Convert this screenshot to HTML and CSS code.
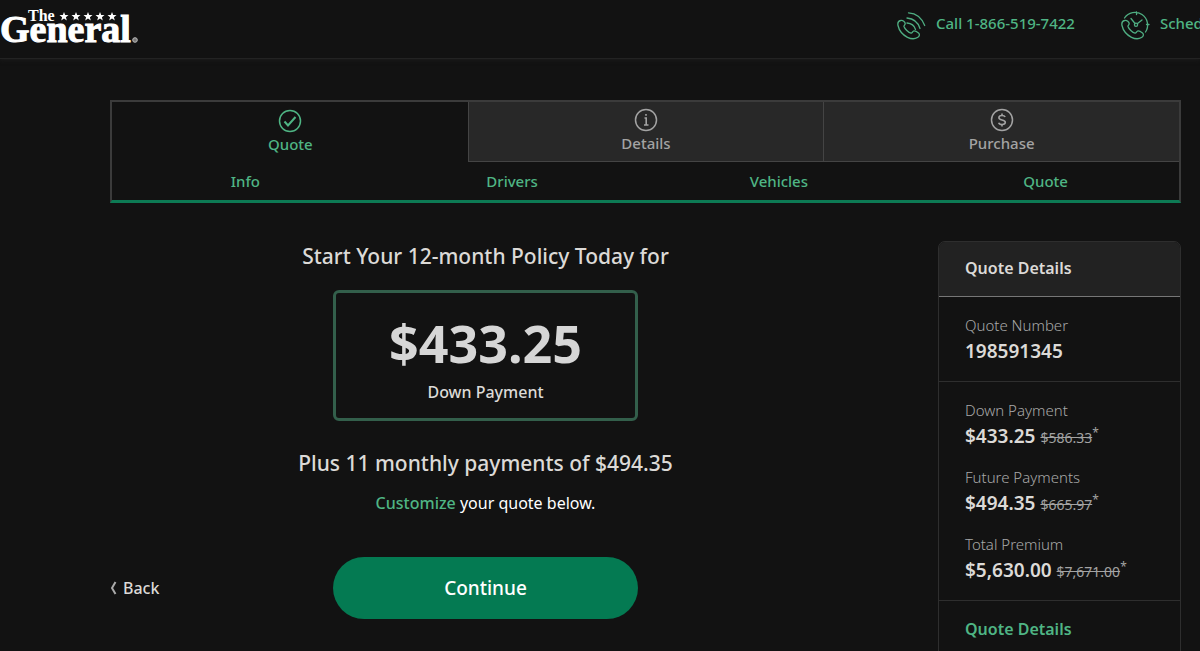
FILE: index.html
```html
<!DOCTYPE html>
<html lang="en">
<head>
	<meta charset="utf-8">
	<title>The General - Your Quote</title>
	<link rel="stylesheet" href="styles.css">
</head>
<body>
	<header class="header">
		<a class="logo" href="#" aria-label="The General">
			<svg width="140" height="40" viewBox="0 0 140 40" fill="#fff">
				<text class="logo-main" x="0" y="36">General</text>
				<text class="logo-the" x="28" y="15">The</text>
				<defs>
					<path id="star" d="M0-4.6 1.2-1.5 4.5-1.4 1.9.7 2.8 3.9 0 2.1-2.8 3.9-1.9.7-4.5-1.4-1.2-1.5z"/>
				</defs>
				<use href="#star" x="64" y="10.500"/>
				<use href="#star" x="76" y="10.500"/>
				<use href="#star" x="88" y="10.500"/>
				<use href="#star" x="100" y="10.500"/>
				<use href="#star" x="112" y="10.500"/>
				<circle cx="135" cy="34" r="2.300" fill="#777" stroke="#bbb"/>
			</svg>
		</a>
		<nav class="contact">
			<a class="contact-link" href="#">
				<svg width="30" height="30" viewBox="0 0 30 30" class="line-icon">
					<path d="M4.500 10.500C2.500 11 1.500 13 2 15.500 3 20 7 25 11.500 27.300 15 29 19 29 21.500 27.500 23.500 26.300 24 24.300 22.500 23 21 21.800 18.800 20.700 17.700 21 16.300 21.500 16.500 23.300 15 23.200 12.500 22.700 8.700 18.800 8 16.500 7.700 15.200 9.300 15 9.200 13.500 9.100 12 7 9.800 4.500 10.500z"/>
					<path d="M11 13c4 .3 7.500 3 8.500 6.500M11 8c6 .5 11 4 13 10.500M12.500 2.800c7.500.5 13.500 5.500 16.200 12.700"/>
				</svg>
				<span>Call 1-866-519-7422</span>
			</a>
			<a class="contact-link" href="#">
				<svg width="30" height="30" viewBox="0 0 30 30" class="line-icon">
					<path d="M4.500 10.500C2.500 11 1.500 13 2 15.500 3 20 7 25 11.500 27.300 15 29 19 29 21.500 27.500 23.500 26.300 24 24.300 22.500 23 21 21.800 18.800 20.700 17.700 21 16.300 21.500 16.500 23.300 15 23.200 12.500 22.700 8.700 18.800 8 16.500 7.700 15.200 9.300 15 9.200 13.500 9.100 12 7 9.800 4.500 10.500z"/>
					<path d="M4.500 8A12.500 12.500 0 1 1 25.500 22M16.500 2v2.500M29 14.500h-2.500M11 8.500l4 5M17.500 13.500l4.500-3.500"/>
					<circle cx="16" cy="14.800" r="1.600"/>
				</svg>
				<span>Schedule a Call</span>
			</a>
		</nav>
	</header>

	<main class="page">
		<nav class="progress">
			<div class="tabs">
				<a class="tab active" href="#">
					<svg width="24" height="24" viewBox="0 0 24 24" class="tab-icon">
						<circle cx="12" cy="12" r="10.500"/>
						<path d="M6.500 12.500 10 16.500 17.500 8" stroke-width="2"/>
					</svg>
					<span>Quote</span>
				</a>
				<a class="tab" href="#">
					<svg width="24" height="24" viewBox="0 0 24 24" class="tab-icon">
						<circle cx="12" cy="12" r="10.500"/>
						<path d="M10.500 10H12.200V17M10 17H14.500M12 6V7.800" stroke-width="1.600"/>
					</svg>
					<span>Details</span>
				</a>
				<a class="tab" href="#">
					<svg width="24" height="24" viewBox="0 0 24 24" class="tab-icon">
						<circle cx="12" cy="12" r="10.500"/>
						<path d="M15.200 9C14.600 7.800 13.500 7.500 12 7.500 10.200 7.500 8.900 8.300 8.900 9.700 8.900 12.800 15.300 11 15.300 14.300 15.300 15.700 14 16.500 12.100 16.500 10.300 16.500 9.100 16 8.700 14.700M12 5.500v2M12 16.500v2" stroke-width="1.600"/>
					</svg>
					<span>Purchase</span>
				</a>
			</div>
			<div class="steps">
				<a href="#">Info</a>
				<a href="#">Drivers</a>
				<a href="#">Vehicles</a>
				<a href="#">Quote</a>
			</div>
		</nav>

		<div class="content">
			<section class="quote">
				<h1 class="quote-title">Start Your 12-month Policy Today for</h1>
				<div class="price-box">
					<strong class="price">$433.25</strong>
					<span class="price-label">Down Payment</span>
				</div>
				<h2 class="quote-title">Plus 11 monthly payments of $494.35</h2>
				<p class="customize"><a href="#">Customize</a> your quote below.</p>
				<div class="actions">
					<a class="back" href="#">
						<svg width="7" height="14" viewBox="0 0 7 14"><path d="M5.500 1 2 7 5.500 13"/></svg>
						<span>Back</span>
					</a>
					<button class="continue" type="button">Continue</button>
				</div>
			</section>

			<aside class="details">
				<h3 class="details-head">Quote Details</h3>
				<dl class="details-group">
					<dt>Quote Number</dt>
					<dd>198591345</dd>
				</dl>
				<dl class="details-group">
					<dt>Down Payment</dt>
					<dd>$433.25 <small><s>$586.33</s><sup>*</sup></small></dd>
					<dt>Future Payments</dt>
					<dd>$494.35 <small><s>$665.97</s><sup>*</sup></small></dd>
					<dt>Total Premium</dt>
					<dd>$5,630.00 <small><s>$7,671.00</s><sup>*</sup></small></dd>
				</dl>
				<div class="details-group">
					<a class="details-link" href="#">Quote Details</a>
				</div>
			</aside>
		</div>
	</main>
</body>
</html>
```
FILE: styles.css
```css
* {
	box-sizing: border-box;
}
body {
	height: 100vh;
	margin: 0;
	overflow: hidden;
	background: #121212;
	color: #dcdad7;
	font-family: "Noto Sans", "Open Sans", sans-serif;
	font-size: 16px;
	line-height: 24px;
}
a {
	color: #4fb584;
	text-decoration: none;
}
h1, h2, h3, p, dl, dd {
	margin: 0;
}

/* header */
.header {
	display: flex;
	justify-content: space-between;
	height: 58px;
	overflow: hidden;
	box-shadow: 0 1px 0 #232323, 0 2px 4px #1d1d1d;
}
.logo {
	padding-top: 6px;
}
.logo-main {
	font: bold 38px "Liberation Serif", serif;
	stroke: #fff;
}
.logo-the {
	font: bold 16px "Liberation Serif", serif;
}
.contact {
	display: flex;
	gap: 45px;
	width: 304px;
	padding-top: 10px;
	font-size: 15px;
	font-weight: 500;
	white-space: nowrap;
}
.contact-link {
	display: flex;
	gap: 10px;
	line-height: 26px;
}
.line-icon {
	flex: none;
	fill: none;
	stroke: #4fae82;
	stroke-width: 1.3;
	stroke-linecap: round;
}

/* progress tabs */
.page {
	padding: 42px 19px 0 110px;
}
.progress {
	border: 2px solid #3b3b3b;
	border-bottom: 3px solid #0d7a54;
	font-size: 15px;
	font-weight: 500;
}
.tabs {
	display: grid;
	grid-template-columns: repeat(3, 1fr);
}
.tab {
	display: flex;
	flex-direction: column;
	align-items: center;
	padding-top: 6px;
	height: 60px;
	line-height: 22px;
	color: #a3a3a3;
	background: #282828;
	border-bottom: 1px solid #444;
	border-left: 1px solid #444;
}
.tab.active {
	padding-top: 7px;
	color: #4fb584;
	background: none;
	border-color: transparent;
}
.tab-icon {
	flex: none;
	fill: none;
	stroke: currentColor;
	stroke-width: 1.5;
}
.steps {
	display: grid;
	grid-template-columns: repeat(4, 1fr);
	line-height: 38px;
	text-align: center;
}

/* quote */
.content {
	display: grid;
	grid-template-columns: 1fr 243px;
	gap: 77px;
	padding-top: 38px;
}
.quote {
	display: flex;
	flex-direction: column;
	align-items: center;
}
.quote-title {
	font-size: 21px;
	font-weight: 500;
	line-height: 30px;
}
.price-box {
	display: flex;
	flex-direction: column;
	align-items: center;
	width: 305px;
	height: 131px;
	margin: 19px 0 27px;
	padding-top: 18px;
	border: 3px solid #335f4b;
	border-radius: 6px;
}
.price {
	font-size: 52px;
	line-height: 64px;
	color: #d6d6d6;
}
.price-label {
	margin-top: 3px;
	font-size: 16px;
	font-weight: 500;
	line-height: 28px;
}
.customize {
	margin: 13px 0 42px;
	color: #fff;
}
.customize a {
	font-weight: 500;
}
.actions {
	display: grid;
	grid-template-columns: 1fr 305px 1fr;
	align-items: center;
	align-self: stretch;
}
.back {
	display: flex;
	align-items: center;
	gap: 6px;
	color: #dcdad7;
	font-weight: 500;
}
.back path {
	fill: none;
	stroke: #aaa;
	stroke-width: 2;
}
.continue {
	height: 62px;
	border: 0;
	border-radius: 31px;
	background: #047a52;
	color: #fff;
	font: 500 19px "Noto Sans", "Open Sans", sans-serif;
}

/* sidebar */
.details {
	height: 480px;
	border: 1px solid #2e2e2e;
	border-radius: 7px 7px 0 0;
}
.details-head {
	padding: 14px 26px 16px;
	background: #222;
	border-bottom: 1px solid #777;
	border-radius: 6px 6px 0 0;
	font-size: 16px;
	font-weight: 600;
}
.details-group {
	padding: 16px 26px;
	border-bottom: 1px solid #2e2e2e;
}
.details-group:last-child {
	border-bottom: 0;
}
dt {
	font-size: 15px;
	font-weight: 300;
	color: #a8a8a8;
}
dd {
	font-size: 19px;
	font-weight: 600;
	line-height: 28px;
}
dd + dt {
	margin-top: 15px;
}
dd small {
	font-size: 14px;
	font-weight: 400;
	line-height: 0;
	color: #a3a3a3;
}
dd sup {
	font-size: 12px;
}
.details-link {
	font-weight: 600;
}
```
